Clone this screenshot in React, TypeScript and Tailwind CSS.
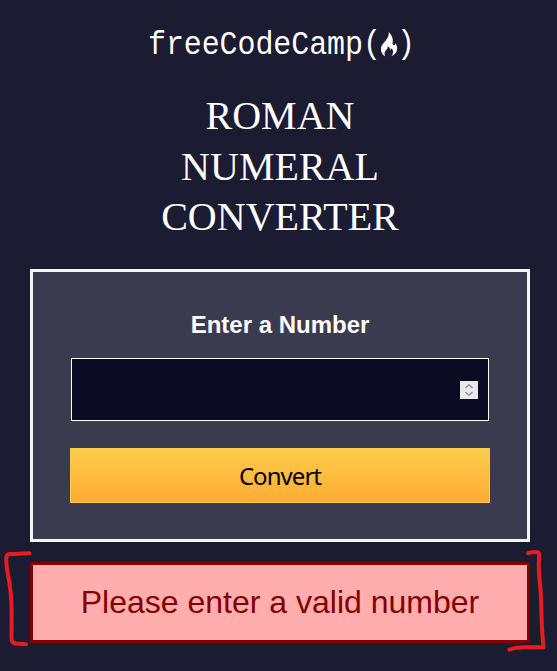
export default function App() {
  return (
    <main className="relative flex h-[671px] w-[557px] flex-col items-center overflow-hidden bg-[#1b1b32] text-white">
      <header className="mt-[24px] flex h-10 w-full items-center pl-[148px] font-['Liberation_Mono',monospace] text-[30px] leading-10">
        <span className="mt-0.5 w-[215px] scale-y-[1.12] tracking-[-0.100px]">freeCodeCamp</span>
        <span className="w-[17px] scale-y-110">(</span>
        <svg className="h-[25px] w-[18px] shrink-0" viewBox="0 0 18 26" fill="white">
          <path d="M8.500 0C9.300 4 7.600 6.200 5 9.500 2.500 12.500.6 14.300.6 17.500c0 3.600 1.500 6.200 4.300 7.800-.8-2.500-.8-4.300.9-6.300 1.300-1.500 2.200-2.500 1.700-4.300 2 .8 2.800 2.200 2.600 3.700.9-.1 1.300-.7 1.300-1.400 1.600 1.500 2.100 3.100 1.700 4.800-.3 1.400-.8 2.500-1.700 3.500 3.600-1.500 5.900-4.300 6.100-7.600.1-2.500-.7-4.500-2-6.300 0 1.600-.4 2.200-1.400 2.200-1.800 0-1.300-2.400-1.100-4.200C13.100 5.700 11.300 2 8.500 0Z" />
        </svg>
        <span className="-ml-px scale-y-110">)</span>
      </header>

      <h1 className="mt-[27px] ml-[3px] w-[260px] text-center font-['Liberation_Serif',serif] text-[40px] leading-[50.500px]">
        ROMAN NUMERAL CONVERTER
      </h1>

      <section className="ml-[3px] mt-[26.500px] flex h-[273px] w-[500px] shrink-0 flex-col items-center border-[3px] border-[#f5f6f7] bg-[#3b3b4f]">
        <label htmlFor="number" className="mt-[38px] font-['Liberation_Sans',sans-serif] text-2xl leading-[30px] font-bold">
          Enter a Number
        </label>
        <div className="mt-[18px] flex h-[63px] w-[418px] items-center border border-white bg-[#0a0a23] pr-2.5">
          <input id="number" className="min-w-0 flex-1 bg-transparent px-3 outline-none" />
          <svg className="h-[18px] w-[18px]" viewBox="0 0 18 18" fill="none">
            <path fill="#e9e9ed" d="M0 0h18v18H0z" />
            <path stroke="#9393a0" strokeWidth="1.500" d="m5.500 7 3.500-3.300L12.500 7m-7 4L9 14.300l3.500-3.300" />
          </svg>
        </div>
        <button className="mt-[27px] h-[55px] w-[420px] border border-[#fecc4c] bg-linear-to-b from-[#fecc4c] to-[#ffac33] font-['Noto_Sans',sans-serif] text-2xl tracking-[-0.950px] text-black">
          Convert
        </button>
      </section>

      <div className="mt-5 ml-[3px] flex h-[81px] w-[500px] shrink-0 items-center justify-center border-[3px] border-[#850000] bg-[#ffadad] pb-0.5 font-['Liberation_Sans',sans-serif] text-[32px] text-[#850000]">
        Please enter a valid number
      </div>

      <svg className="pointer-events-none absolute inset-0 h-full w-full" viewBox="0 0 557 671" fill="none" stroke="#e81c20" strokeWidth="4" strokeLinecap="round" strokeLinejoin="round">
        <path d="M29.500 553.300c-8 0-14 .7-19.500.7-3 0-3.500 1-3.700 4-.4 11 2.400 18 3.700 29 2.500 17 1.500 31 1.500 51 0 4 1 5 5 5.500l9.500.7" />
        <path d="M528 553.200c4-1.200 7-1.200 9.500-1 2 .2 1.500 3 1.300 12-.2 11 1 16 2 29 1 19 .2 31 2.700 54h-19.500c-7 0-10 .6-14.500 2.500" />
      </svg>
    </main>
  );
}
